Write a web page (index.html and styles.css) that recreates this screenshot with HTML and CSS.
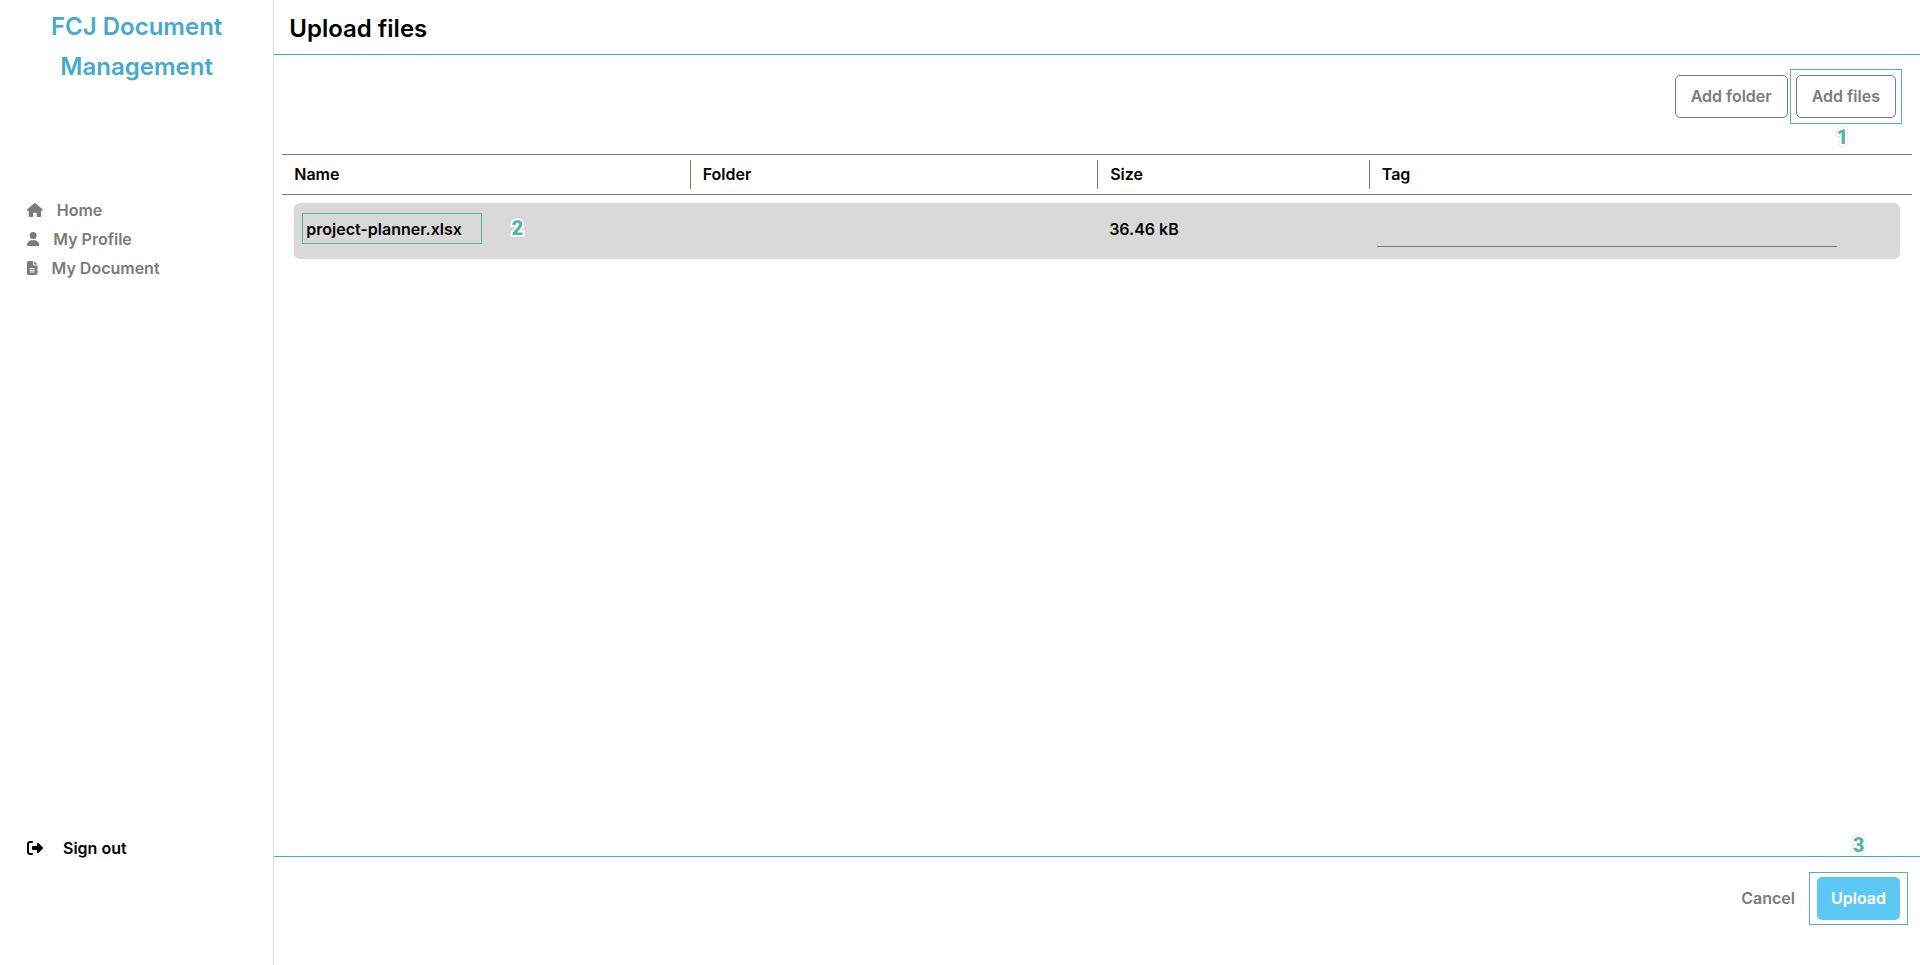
FILE: index.html
```html
<!DOCTYPE html>
<html lang="en">
<head>
<meta charset="utf-8">
<meta name="viewport" content="width=device-width, initial-scale=1">
<title>FCJ Document Management</title>
<link rel="stylesheet" href="styles.css">
</head>
<body>
<div class="app">
  <aside class="sidebar">
    <h1 class="brand">FCJ Document Management</h1>
    <nav class="menu">
      <a class="menu-link" href="#"><svg class="icon" viewBox="0 0 576 512" aria-hidden="true"><path d="M575.8 255.5c0 18-15 32.1-32 32.1l-32 0 .7 160.2c0 2.7-.2 5.4-.5 8.1l0 16.2c0 22.1-17.9 40-40 40l-16 0c-1.1 0-2.2 0-3.3-.1c-1.4 .1-2.8 .1-4.2 .1L416 512l-24 0c-22.1 0-40-17.9-40-40l0-24 0-64c0-17.7-14.3-32-32-32l-64 0c-17.7 0-32 14.3-32 32l0 64 0 24c0 22.1-17.9 40-40 40l-24 0-31.9 0c-1.5 0-3-.1-4.5-.2c-1.2 .1-2.4 .2-3.6 .2l-16 0c-22.1 0-40-17.9-40-40l0-112c0-.9 0-1.9 .1-2.8l0-69.7-32 0c-18 0-32-14-32-32.1c0-9 3-17 10-24L266.4 8c7-7 15-8 22-8s15 2 21 7L564.8 231.5c8 7 12 15 11 24z"/></svg>Home</a>
      <a class="menu-link" href="#"><svg class="icon" viewBox="0 0 448 512" aria-hidden="true"><path d="M224 256A128 128 0 1 0 224 0a128 128 0 1 0 0 256zm-45.700 48C79.800 304 0 383.800 0 482.300C0 498.700 13.300 512 29.700 512l388.600 0c16.400 0 29.700-13.300 29.700-29.700C448 383.800 368.200 304 269.700 304l-91.400 0z"/></svg>My Profile</a>
      <a class="menu-link" href="#"><svg class="icon" viewBox="0 0 384 512" aria-hidden="true"><path d="M64 0C28.700 0 0 28.700 0 64V448c0 35.300 28.700 64 64 64H320c35.300 0 64-28.700 64-64V160H256c-17.700 0-32-14.300-32-32V0H64zM256 0V128H384L256 0zM112 256H272c8.800 0 16 7.200 16 16s-7.200 16-16 16H112c-8.800 0-16-7.200-16-16s7.200-16 16-16zm0 64H272c8.800 0 16 7.200 16 16s-7.200 16-16 16H112c-8.800 0-16-7.200-16-16s7.200-16 16-16zm0 64H272c8.800 0 16 7.200 16 16s-7.200 16-16 16H112c-8.800 0-16-7.200-16-16s7.200-16 16-16z"/></svg>My Document</a>
    </nav>
    <button class="sign-out" type="button"><svg class="icon-out" viewBox="0 0 512 512" aria-hidden="true"><path d="M377.900 105.900L500.700 228.700c7.200 7.200 11.300 17.100 11.300 27.300s-4.100 20.100-11.300 27.300L377.900 406.100c-6.400 6.400-15 9.900-24 9.900c-18.700 0-33.900-15.200-33.900-33.900l0-62.100-128 0c-17.700 0-32-14.300-32-32l0-64c0-17.700 14.300-32 32-32l128 0 0-62.100c0-18.700 15.200-33.900 33.900-33.900c9 0 17.600 3.600 24 9.900zM160 96L96 96c-17.700 0-32 14.300-32 32l0 256c0 17.700 14.300 32 32 32l64 0c17.700 0 32 14.300 32 32s-14.300 32-32 32l-64 0c-53 0-96-43-96-96L0 128C0 75 43 32 96 32l64 0c17.700 0 32 14.300 32 32s-14.300 32-32 32z"/></svg>Sign out</button>
  </aside>
  <main class="main">
    <header class="header"><h2 class="title">Upload files</h2></header>
    <div class="toolbar">
      <button class="btn btn-outline" type="button">Add folder</button>
      <div class="marked">
        <button class="btn btn-outline" type="button">Add files</button>
        <span class="frame frame-add"></span>
        <span class="step step-add">1</span>
      </div>
    </div>
    <table class="files">
      <thead>
        <tr class="row head"><th>Name</th><th>Folder</th><th>Size</th><th>Tag</th></tr>
      </thead>
      <tbody>
        <tr class="row item">
          <td><div class="marked"><span>project-planner.xlsx</span><span class="frame frame-name"></span><span class="step step-name">2</span></div></td>
          <td></td>
          <td>36.46 kB</td>
          <td class="tag-cell"><input class="tag-input" type="text" aria-label="Tag"></td>
        </tr>
      </tbody>
    </table>
    <footer class="footer">
      <button class="btn btn-plain" type="button">Cancel</button>
      <div class="marked">
        <button class="btn btn-primary" type="button">Upload</button>
        <span class="frame frame-upload"></span>
        <span class="step step-upload">3</span>
      </div>
    </footer>
  </main>
</div>
</body>
</html>
```
FILE: styles.css
```css
* { box-sizing: border-box; }

body {
  margin: 0;
  background: #fff;
  color: #000;
  font: 600 16px/24px Inter, sans-serif;
}

.app {
  display: grid;
  grid-template-columns: 1fr 6fr;
  min-height: 100vh;
}

.sidebar {
  display: flex;
  flex-direction: column;
  padding: 7px 27px 105px;
  border-right: 1px solid #dcdcdc;
}

.brand {
  margin: 0;
  color: #47a9ce;
  font-size: 24px;
  font-weight: 600;
  line-height: 40px;
  text-align: center;
}

.menu {
  display: flex;
  flex-direction: column;
  gap: 5px;
  margin-top: 111px;
}

.menu-link {
  display: flex;
  align-items: center;
  gap: 14px;
  color: #7b7b7b;
  text-decoration: none;
}

.icon { height: 14px; fill: currentColor; }
.icon-out { height: 16px; fill: currentColor; }

.sign-out {
  display: flex;
  align-items: center;
  gap: 20px;
  margin-top: auto;
  padding: 0;
  border: 0;
  background: none;
  color: #000;
  font: inherit;
}

.main {
  display: flex;
  flex-direction: column;
}

.header {
  padding: 9px 15px 5px;
  border-bottom: 1px solid #47a9ce;
}

.title {
  margin: 0;
  font-size: 24px;
  font-weight: 600;
  line-height: 40px;
}

.toolbar {
  display: flex;
  justify-content: flex-end;
  gap: 8px;
  padding: 20px 24px 36px;
}

.btn {
  display: block;
  padding: 9px 13px;
  border: 1px solid transparent;
  border-radius: 5px;
  background: none;
  font: 600 16px/23px Inter, sans-serif;
}

.btn-outline { padding: 9px 15px; border-color: #7b7b7b; color: #7b7b7b; }
.btn-plain { color: #7b7b7b; }
.btn-primary { background: #5dc8f5; color: #fff; }

.files {
  display: block;
  margin: 0 8px;
}

.files thead,
.files tbody { display: block; }

.row {
  display: grid;
  grid-template-columns: 3fr 3fr 2fr 4fr;
  align-items: center;
}

.row th,
.row td {
  padding: 0 12px;
  text-align: left;
  font-weight: 600;
}

.head {
  padding: 5px 0;
  border-top: 1px solid #7b7b7b;
  border-bottom: 1px solid #7b7b7b;
}

.head th { line-height: 29px; }
.head th + th { border-left: 1px solid #7b7b7b; }

.item {
  min-height: 56px;
  margin: 8px 12px;
  padding-bottom: 4px;
  border-radius: 6px;
  background: #d9d9d9;
}

.item .tag-cell { align-self: end; padding-bottom: 8px; }

.tag-input {
  display: block;
  width: 90%;
  height: 32px;
  padding: 0 4px;
  border: 0;
  border-bottom: 1px solid #7b7b7b;
  background: transparent;
  font: inherit;
}

.footer {
  display: flex;
  justify-content: flex-end;
  gap: 8px;
  margin-top: auto;
  padding: 20px 20px 45px;
  border-top: 1px solid #47a9ce;
}

/* Step markers drawn over the controls */
.marked {
  position: relative;
  width: max-content;
}

.frame {
  position: absolute;
  border: 1px solid #55b7a0;
  pointer-events: none;
}

.frame-add { inset: -6px; }
.frame-name { inset: -4px -20px -3px -4px; }
.frame-upload { inset: -5px -8px; }

.step {
  position: absolute;
  color: #55b7a0;
  font: 900 20px/20px Roboto, sans-serif;
  -webkit-text-stroke: 4px #fff;
  paint-order: stroke fill;
  filter: drop-shadow(0 0 1px #ccc);
}

.step-add { top: 52px; left: 41px; }
.step-name { top: 1px; left: 100%; margin-left: 50px; }
.step-upload { top: -42px; left: 36px; }
```
